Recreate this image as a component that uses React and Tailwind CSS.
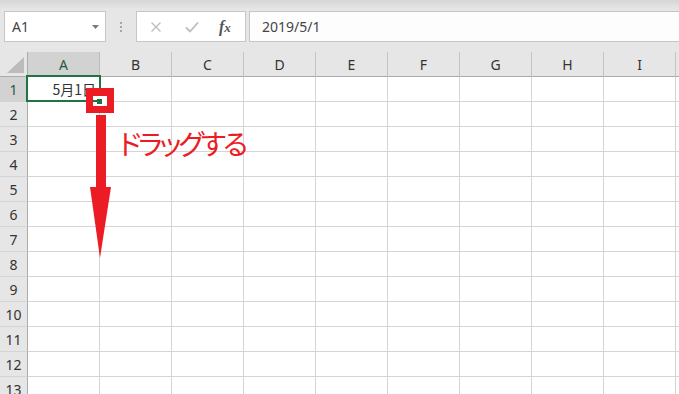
import React from 'react';

const cols = ['A', 'B', 'C', 'D', 'E', 'F', 'G', 'H', 'I', ''];
const rows = [1, 2, 3, 4, 5, 6, 7, 8, 9, 10, 11, 12, 13];
const font = { fontFamily: '"Noto Sans", "Noto Sans CJK JP", sans-serif' };

export default function App() {
  return (
    <div className="relative w-[679px] h-[394px] overflow-hidden bg-white text-[#333]" style={font}>
      {/* formula bar */}
      <div className="flex items-start h-[52px] pt-[11px] pl-[4px] bg-[linear-gradient(#d6d6d6,#e6e6e6_9px)]">
        <div className="flex items-center justify-between w-[102px] h-[31px] border border-[#c6c6c6] bg-white pl-[7px] pr-[6px]">
          <span className="text-[14px] leading-none text-[#444]">A1</span>
          <svg width="7" height="4" viewBox="0 0 7 4"><polygon points="0,0 7,0 3.5,4" fill="#7a7a7a" /></svg>
        </div>
        <div className="flex flex-col items-center justify-center gap-[2px] w-[30px] h-[31px]">
          <span className="w-[2px] h-[2px] bg-[#a6a6a6]" />
          <span className="w-[2px] h-[2px] bg-[#a6a6a6]" />
          <span className="w-[2px] h-[2px] bg-[#a6a6a6]" />
        </div>
        <div className="flex items-center w-[110px] h-[31px] border border-[#c6c6c6] bg-white">
          <svg className="ml-[13px]" width="12" height="12" viewBox="0 0 12 12">
            <path d="M1.5 1.5 L10.5 10.5 M10.5 1.5 L1.5 10.5" stroke="#bdbdbd" strokeWidth="1.4" fill="none" />
          </svg>
          <svg className="ml-[23px]" width="14" height="12" viewBox="0 0 14 12">
            <path d="M1 6.5 L5 10.5 L13 1.5" stroke="#bdbdbd" strokeWidth="1.8" fill="none" />
          </svg>
          <span className="ml-[20px] leading-none italic text-[#555]" style={{ fontFamily: '"Liberation Serif", serif' }}>
            <span className="text-[16px] font-bold">f</span><span className="text-[13px] font-bold">x</span>
          </span>
        </div>
        <div className="flex items-center flex-1 h-[31px] ml-[3px] border border-[#c6c6c6] border-r-0 bg-[#fdfdfd] pl-[12px]">
          <span className="text-[14px] leading-none text-[#444]">2019/5/1</span>
        </div>
      </div>

      {/* header row */}
      <div className="flex h-[25px] bg-[#e6e6e6]">
        <div className="relative w-[28px] shrink-0 border-r border-b border-[#ababab]">
          <svg className="absolute left-[7px] top-[5px]" width="17" height="16" viewBox="0 0 17 16">
            <polygon points="17,0 17,16 0,16" fill="#bcbcbc" />
          </svg>
        </div>
        {cols.map((c, i) => (
          <div
            key={i}
            className={
              i === 0
                ? 'flex items-center justify-center w-[72px] shrink-0 border-r border-b border-r-[#bdbdbd] border-b-[#ababab] bg-[#d2d2d2] text-[14px] text-[#1f5c3a]'
                : 'flex items-center justify-center w-[72px] shrink-0 border-r border-b border-r-[#c4c4c4] border-b-[#ababab] text-[14px] text-[#333]'
            }
          >
            {c}
          </div>
        ))}
      </div>

      {/* rows */}
      {rows.map((r) => (
        <div key={r} className="flex h-[25px]">
          <div
            className={
              r === 1
                ? 'flex items-center justify-center w-[28px] shrink-0 border-r border-b border-r-[#ababab] border-b-[#d4d4d4] bg-[#d2d2d2] text-[14px] text-[#1f5c3a]'
                : 'flex items-center justify-center w-[28px] shrink-0 border-r border-b border-r-[#ababab] border-b-[#d4d4d4] bg-[#e6e6e6] text-[14px] text-[#333]'
            }
          >
            {r}
          </div>
          {cols.map((c, i) => (
            <div key={i} className="flex items-center justify-end w-[72px] shrink-0 border-r border-b border-[#d4d4d4] pr-[3px] text-[14px]">
              {r === 1 && c === 'A' ? <span style={{ fontFamily: '"Noto Sans CJK JP", sans-serif' }}>5月1日</span> : null}
            </div>
          ))}
        </div>
      ))}

      {/* selection */}
      <div className="absolute left-[26px] top-[75px] w-[75px] h-[27px] border-2 border-[#217346]" />

      {/* red highlight box around fill handle */}
      <div className="absolute left-[86px] top-[88px] w-[28px] h-[25px] border-[7px] border-t-[8px] border-[#ec1c24] bg-white">
        <div className="absolute left-0 top-[4px] w-[5px] h-[2px] bg-[#217346]" />
        <div className="absolute left-[4px] top-[3px] w-[5px] h-[5px] bg-[#217346]" />
      </div>

      {/* arrow */}
      <svg className="absolute left-[88px] top-[113px]" width="26" height="148" viewBox="0 0 26 148">
        <rect x="8" y="2" width="10" height="73" fill="#ec1c24" />
        <polygon points="2,74 23,74 12,145" fill="#ec1c24" />
      </svg>

      {/* label */}
      <div
        className="absolute left-[119px] top-[129px] text-[28px] leading-none tracking-[-3px] text-[#ec1c24]"
        style={{ fontFamily: '"Noto Sans CJK JP", sans-serif', fontFeatureSettings: '"palt"' }}
      >
        ドラッグする
      </div>
    </div>
  );
}
